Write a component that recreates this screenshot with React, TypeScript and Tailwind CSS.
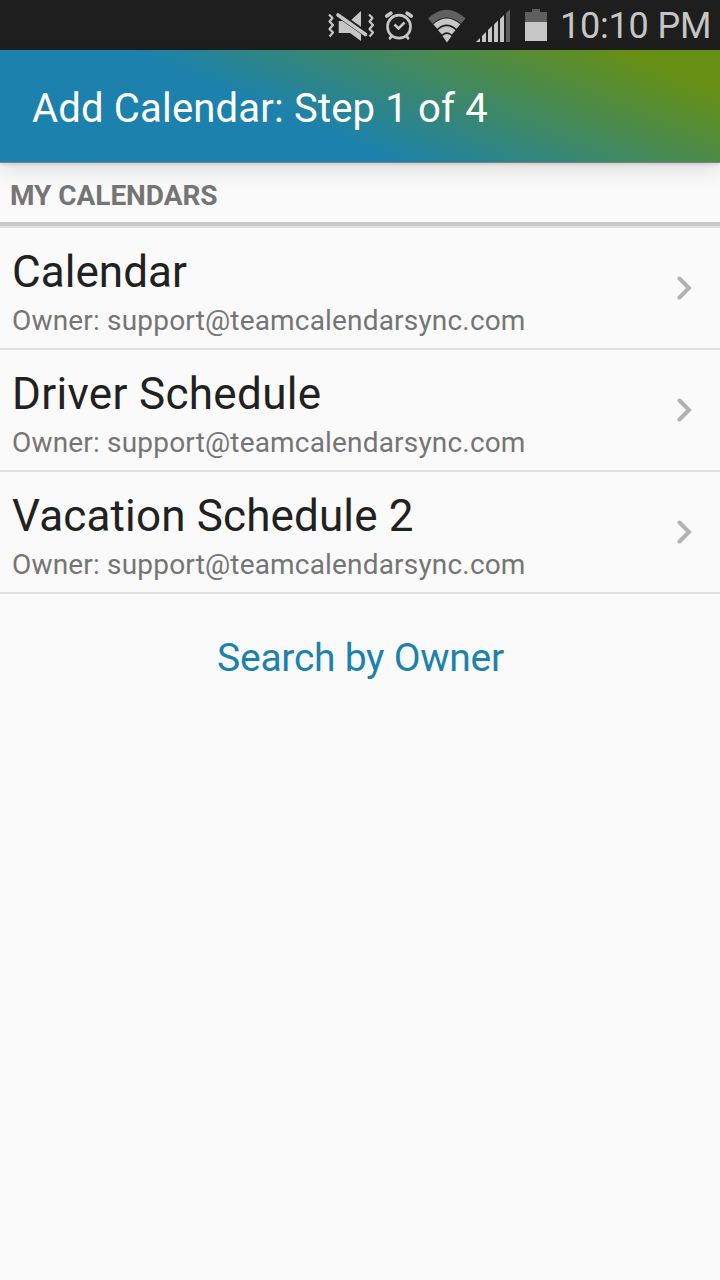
const calendars = [
  { id: 1, name: "Calendar", owner: "support@teamcalendarsync.com", tracking: "tracking-[0.05px]" },
  { id: 2, name: "Driver Schedule", owner: "support@teamcalendarsync.com", tracking: "tracking-[0.33px]" },
  { id: 3, name: "Vacation Schedule 2", owner: "support@teamcalendarsync.com", tracking: "tracking-[0.15px]" },
];

function StatusIcons() {
  return (
    <svg width="240" height="50" viewBox="320 0 240 50" fill="none" className="shrink-0">
      {/* vibrate / muted */}
      <g stroke="#c6c6c6" strokeWidth="2.2" strokeLinejoin="round">
        <path d="M329 14.500l3.500 3.500-3 3.500 3.500 3.500-3.500 4 3.500 3.500-3.500 4" />
        <path d="M369 14.500l3.500 3.500-3 3.500 3.500 3.500-3.500 4 3.500 3.500-3.500 4" />
      </g>
      <path d="M338.700 21h11.300l11-10v30l-11-8h-11.300z" fill="#c6c6c6" />
      <path d="M336 12.800l32 22.600" stroke="#1e1e1e" strokeWidth="6" />
      <path d="M338 15l27.500 19.500" stroke="#c6c6c6" strokeWidth="3.600" strokeLinecap="round" />
      {/* alarm */}
      <g stroke="#c6c6c6" strokeLinecap="round">
        <circle cx="399" cy="26.700" r="11.500" strokeWidth="2.700" />
        <path d="M394.500 24.500l4 4 6-6" strokeWidth="2.600" strokeLinecap="butt" />
        <path d="M386.800 16l4-2.700M407.200 13.300l4 2.700" strokeWidth="3.800" />
        <path d="M391.500 36l-1.500 2.300M406.500 36l1.500 2.300" strokeWidth="2.800" />
      </g>
      {/* wifi */}
      <path d="M428 18.500Q446.500 1 465.500 18.500L461 23.700Q446.500 11.500 432.500 23.700Z" fill="#606060" />
      <g fill="#c6c6c6">
        <path d="M433.300 24.300Q446.500 12.500 460.300 24.300L456.500 28.700Q446.500 20.500 437.200 28.700Z" />
        <path d="M438 30.300Q446.500 22 455.500 30.300L451.800 34.500Q446.500 30 442 34.500Z" />
        <path d="M442.500 36Q447 32 451.500 36L447 42.500Z" />
      </g>
      {/* signal */}
      <g fill="#c6c6c6">
        <path d="M476 42l4-4v4z" />
        <path d="M482 42v-6l4-4v10z" />
        <path d="M488 42V30l4-4v16z" />
        <path d="M494 42V24.500l4-4V42z" />
        <path d="M500 42V19l4-4v27z" />
      </g>
      <path d="M506 42V13l4-3.500V42z" fill="#5f5f5f" />
      {/* battery */}
      <path d="M525 22V12h7V9h8v3h7v10z" fill="#5f5f5f" />
      <path d="M525 22h22v19h-22z" fill="#c6c6c6" />
    </svg>
  );
}

function Chevron() {
  return (
    <svg width="16" height="26" viewBox="0 0 16 26" fill="none" className="shrink-0">
      <path d="M2.500 3.500l9.500 9.500-9.500 9.500" stroke="#b2b2b2" strokeWidth="4" strokeLinecap="round" />
    </svg>
  );
}

export default function App() {
  return (
    <div className="flex min-h-[1280px] w-[720px] flex-col bg-[#fafafa] font-['Roboto',sans-serif]">
      <div className="flex h-[50px] items-center justify-end bg-[#1e1e1e]">
        <StatusIcons />
        <span className="w-40 whitespace-nowrap pt-0.5 text-[36px] leading-[50px] tracking-[-0.2px] text-[#c6c6c6]">10:10 PM</span>
      </div>

      <header className="flex h-28 items-center bg-[linear-gradient(23deg,#1c82ad_40%,#668f14_90%)] pl-8 shadow-[0_1px_0px_rgba(0,0,0,0.38),0_2px_4px_rgba(0,0,0,0.14),0_8px_20px_rgba(0,0,0,0.11)]">
        <h1 className="whitespace-nowrap pt-1.5 text-[40px] leading-[48px] tracking-[0.18px] text-white">Add Calendar: Step 1 of 4</h1>
      </header>

      <main>
        <h2 className="h-[60px] pl-2.5 pt-[18px] text-[28px] font-bold leading-8 tracking-[-0.05px] text-[#757575]">MY CALENDARS</h2>
        <div className="h-1 bg-[#c8c8c8]" />
        <ul className="border-t-2 border-[#e0e0e0]">
          {calendars.map((c) => (
            <li key={c.id} className="flex h-[122px] items-center justify-between border-b-2 border-[#e0e0e0] pl-3 pr-[27px]">
              <div className="whitespace-nowrap pt-3.5">
                <div className={`text-[44px] leading-[52px] text-[#212121] ${c.tracking}`}>{c.name}</div>
                <div className="text-[28px] leading-[46px] tracking-[0.18px] text-[#757575]">Owner: {c.owner}</div>
              </div>
              <Chevron />
            </li>
          ))}
        </ul>
        <button className="mt-10 block w-full pl-px text-center text-[39px] leading-[48px] tracking-[-0.27px] text-[#1c82ad]">Search by Owner</button>
      </main>
    </div>
  );
}
